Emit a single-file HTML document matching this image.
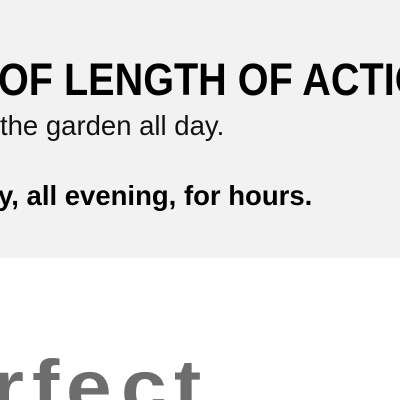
<!DOCTYPE html>
<html><head><style>
html,body{margin:0;padding:0;width:400px;height:400px;overflow:hidden;background:#fff;position:relative;font-family:"Liberation Sans",Arial,sans-serif}
.wrap{position:absolute;left:0;top:0;width:400px;height:400px;overflow:hidden}
.box{position:absolute;left:0;top:0;width:400px;height:258px;background:#f2f2f2}
.h{position:absolute;left:-2px;top:57px;font-size:45px;font-weight:bold;line-height:1;color:#000;white-space:nowrap;transform:scaleX(0.88);transform-origin:0 0}
.t1{position:absolute;left:0;top:111px;font-size:27.5px;line-height:30px;color:#111;white-space:nowrap}
.t2{position:absolute;left:-2px;top:181px;font-size:27.5px;line-height:30px;font-weight:bold;color:#000;white-space:nowrap}
.p span{position:absolute;top:350px;font-size:76px;line-height:50px;height:50px;overflow:visible;font-weight:bold;color:#6d6d6d;transform:scaleX(1.08);transform-origin:0 0}
</style></head><body>
<div class="wrap">
<div class="box"></div>
<div class="h">OF LENGTH OF ACTION</div>
<div class="t1">the garden all day.</div>
<div class="t2">y, all evening, for hours.</div>
<div class="p"><span style="left:-8px;top:363px">r</span><span style="left:32px;top:363px">f</span><span style="left:66px;top:363px">e</span><span style="left:121px;top:363px">c</span><span style="left:174px;top:363px">t</span></div>
</div>
</body></html>
